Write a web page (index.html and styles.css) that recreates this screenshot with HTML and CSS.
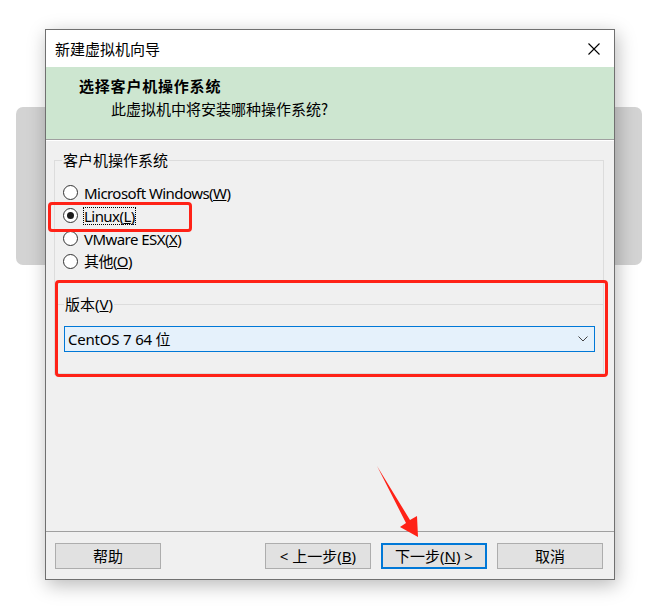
FILE: index.html
```html
<!DOCTYPE html>
<html lang="zh-CN">
<head>
<meta charset="utf-8">
<title>新建虚拟机向导</title>
<link rel="stylesheet" href="styles.css">
</head>
<body>
<div class="stage">
  <div class="backdrop"></div>
  <div class="dialog">
    <div class="titlebar">
      <span class="title">新建虚拟机向导</span>
      <svg class="close" width="12" height="12" viewBox="0 0 12 12"><path d="M0.5 0.5 L11.5 11.5 M11.5 0.5 L0.5 11.5" stroke="#000" stroke-width="1.1" fill="none"/></svg>
    </div>
    <div class="header">
      <div class="h-title">选择客户机操作系统</div>
      <div class="h-sub">此虚拟机中将安装哪种操作系统?</div>
    </div>
    <div class="body">
      <div class="group">
        <div class="group-label">客户机操作系统</div>
        <div class="radios">
          <div class="radio-row"><span class="radio"></span><span class="rlabel">Microsoft Windows(<u>W</u>)</span></div>
          <div class="radio-row"><span class="radio checked"></span><span class="rlabel focus">Linux(<u>L</u>)</span></div>
          <div class="radio-row"><span class="radio"></span><span class="rlabel">VMware ESX(<u>X</u>)</span></div>
          <div class="radio-row"><span class="radio"></span><span class="rlabel">其他(<u>O</u>)</span></div>
        </div>
        <div class="vgroup">
          <div class="group-label">版本(<u>V</u>)</div>
          <div class="select">
            <span>CentOS 7 64 位</span>
            <svg width="10" height="6" viewBox="0 0 10 6"><path d="M0.5 0.5 L5 5 L9.5 0.5" stroke="#444" stroke-width="1" fill="none"/></svg>
          </div>
        </div>
      </div>
    </div>
    <div class="footer">
      <div class="btn">帮助</div>
      <div class="spacer"></div>
      <div class="btn">&lt; 上一步(<u>B</u>)</div>
      <div class="btn primary">下一步(<u>N</u>) &gt;</div>
      <div class="btn">取消</div>
    </div>
  </div>
  <div class="mark mark-linux"></div>
  <div class="mark mark-version"></div>
  <svg class="arrow" width="60" height="90" viewBox="370 460 60 90">
    <polygon points="377,466 410,520 417,516 418,537 400,527 406,523" fill="#ff2217"/>
  </svg>
</div>
</body>
</html>
```

FILE: styles.css
```css
html, body {
  margin: 0;
  padding: 0;
  background: #ffffff;
}
body {
  font-family: "Noto Sans", "Noto Sans CJK SC", sans-serif;
  font-size: 15px;
  color: #000;
}
.stage {
  position: relative;
  width: 662px;
  height: 613px;
  overflow: hidden;
}
.backdrop {
  position: absolute;
  left: 16px;
  top: 107px;
  width: 626px;
  height: 158px;
  background: #d3d3d3;
  border-radius: 7px;
}
.dialog {
  position: absolute;
  left: 45px;
  top: 29px;
  width: 568px;
  height: 549px;
  border: 1px solid #707070;
  background: #f0f0f0;
  display: flex;
  flex-direction: column;
  box-shadow: 2px 5px 18px rgba(0, 0, 0, 0.28);
}
.titlebar {
  height: 37px;
  flex: none;
  background: #fff;
  display: flex;
  align-items: center;
  justify-content: space-between;
  padding: 0 14px 0 9px;
  line-height: 20px;
}
.title {
  font-family: "Noto Sans CJK SC", sans-serif;
}
.close {
  display: block;
  margin-top: 1px;
}
.header {
  flex: none;
  background: #cde6d0;
  border-bottom: 1px solid #a0a0a0;
  box-shadow: 0 1px 0 #ffffff;
  padding-top: 9px;
  box-sizing: border-box;
  height: 73px;
  font-family: "Noto Sans CJK SC", sans-serif;
}
.h-title {
  font-weight: bold;
  margin-left: 33px;
  line-height: 20px;
  letter-spacing: 0.8px;
}
.h-sub {
  margin-left: 65px;
  margin-top: 3px;
  line-height: 20px;
}
.body {
  flex: 1;
  padding-top: 20px;
}
.group {
  margin: 0 10px 0 8px;
  border: 1px solid #dcdcdc;
  height: 215px;
  box-sizing: border-box;
}
.group-label {
  display: block;
  width: fit-content;
  margin: -11px 0 0 7px;
  padding: 0 1px;
  background: #f0f0f0;
  line-height: 20px;
  height: 20px;
}
.radios {
  margin-top: 11px;
  padding-left: 8px;
}
.radio-row {
  height: 23px;
  display: flex;
  align-items: center;
}
.radio-row:last-child {
  height: 22px;
}
.radio {
  width: 13px;
  height: 13px;
  border: 1px solid #333;
  border-radius: 50%;
  background: #fff;
  position: relative;
  flex: none;
}
.radio.checked::after {
  content: "";
  position: absolute;
  left: 3px;
  top: 3px;
  width: 7px;
  height: 7px;
  border-radius: 50%;
  background: #1a1a1a;
}
.rlabel {
  margin-left: 5px;
  line-height: 18px;
  padding: 0 1px;
  letter-spacing: -0.55px;
}
.rlabel.focus {
  outline: 1px dotted #000;
  outline-offset: -1px;
}
.vgroup {
  margin: 32px -1px 0 1px;
  border: 1px solid #dcdcdc;
  height: 70px;
  box-sizing: border-box;
}
.select {
  margin: 12px 8px 0 7px;
  height: 26px;
  box-sizing: border-box;
  border: 1px solid #0078d7;
  background: #e5f1fb;
  display: flex;
  align-items: center;
  justify-content: space-between;
  padding: 0 6px 0 3px;
}
.select span {
  line-height: 20px;
  letter-spacing: -0.2px;
}
.select svg {
  display: block;
}
.footer {
  flex: none;
  border-top: 1px solid #a0a0a0;
  height: 48px;
  box-sizing: border-box;
  display: flex;
  align-items: flex-start;
  padding: 11px 11px 0 9px;
  gap: 10px;
}
.spacer {
  flex: 1;
}
.btn {
  width: 106px;
  height: 26px;
  box-sizing: border-box;
  border: 1px solid #adadad;
  background: #e1e1e1;
  display: flex;
  align-items: center;
  justify-content: center;
  line-height: 20px;
}
.btn.primary {
  border: 2px solid #0078d7;
}
.mark {
  position: absolute;
  border: 3px solid #ff2217;
  border-radius: 4px;
  box-sizing: border-box;
}
.mark-linux {
  left: 48px;
  top: 202px;
  width: 144px;
  height: 30px;
}
.mark-version {
  left: 55px;
  top: 280px;
  width: 553px;
  height: 97px;
  border-width: 3.5px;
}
.arrow {
  position: absolute;
  left: 370px;
  top: 460px;
}
```
